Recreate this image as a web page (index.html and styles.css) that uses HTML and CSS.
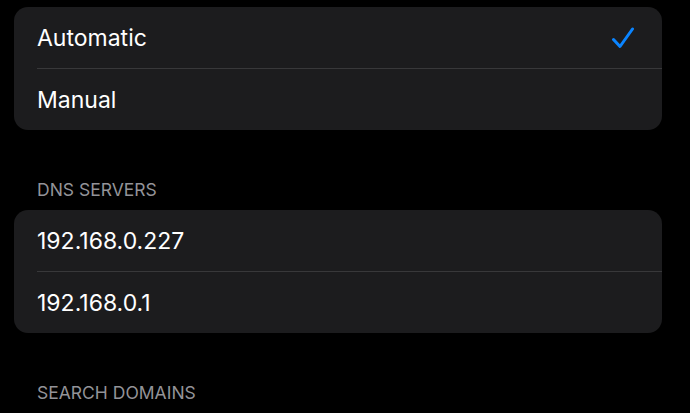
FILE: index.html
```html
<!DOCTYPE html>
<html>
<head>
<meta charset="utf-8">
<link rel="stylesheet" href="styles.css">
</head>
<body>
<div class="page">
  <div class="group">
    <div class="row">
      <span class="label">Automatic</span>
      <svg class="check" width="24" height="22" viewBox="0 0 24 22"><path d="M2.5 12.5 L9 19.5 L21.5 2" fill="none" stroke="#0a84ff" stroke-width="3" stroke-linecap="round" stroke-linejoin="round"/></svg>
    </div>
    <div class="row">
      <span class="label">Manual</span>
    </div>
  </div>
  <div class="header">DNS SERVERS</div>
  <div class="group">
    <div class="row"><span class="label">192.168.0.227</span></div>
    <div class="row"><span class="label">192.168.0.1</span></div>
  </div>
  <div class="header">SEARCH DOMAINS</div>
</div>
</body>
</html>
```
FILE: styles.css
```css
html, body {
  margin: 0;
  padding: 0;
  background: #000;
}
body {
  font-family: Inter, "Noto Sans", sans-serif;
  color: #fff;
}
.page {
  padding: 7px 28px 0 14px;
}
.group {
  background: #1c1c1e;
  border-radius: 14px;
  overflow: hidden;
}
.row {
  height: 61px;
  display: flex;
  align-items: center;
  justify-content: space-between;
  margin-left: 23px;
  padding-right: 27px;
  box-sizing: border-box;
}
.row + .row {
  border-top: 1px solid #38383a;
  height: 62px;
}
.label {
  font-size: 23px;
  letter-spacing: 0;
}
.check {
  display: block;
}
.header {
  color: #939398;
  font-size: 17.5px;
  padding: 49px 0 0 23px;
  height: 31px;
  line-height: 22px;
}
```
